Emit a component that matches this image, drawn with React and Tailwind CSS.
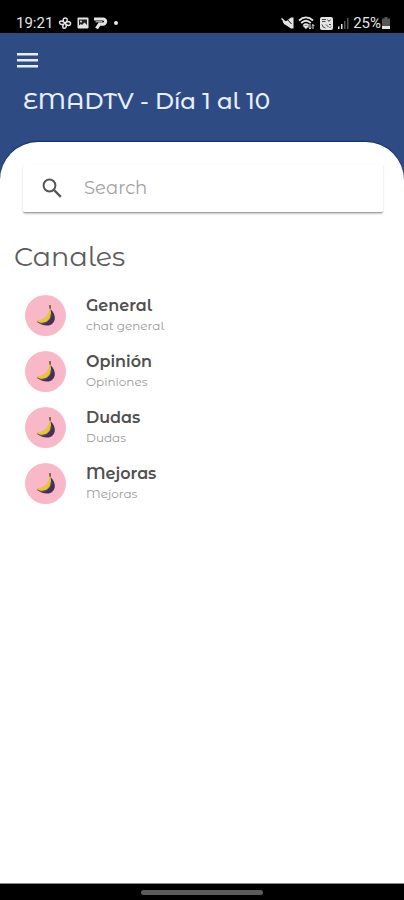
import { useMemo, useState } from 'react'

const channels = [
  { id: 1, name: 'General', detail: 'chat general' },
  { id: 2, name: 'Opinión', detail: 'Opiniones' },
  { id: 3, name: 'Dudas', detail: 'Dudas' },
  { id: 4, name: 'Mejoras', detail: 'Mejoras' },
]

export default function App() {
  const [search, setSearch] = useState('')
  const rows = useMemo(() => channels.filter((c) =>
    !search || (c.name + ' ' + c.detail).toLowerCase().includes(search.toLowerCase())), [search])

  return (
    <div className="min-h-screen flex flex-col bg-[#2f4b83] font-['Montserrat_Alternates','Inter',sans-serif]">
      <StatusBar />
      <header className="pt-[13px] pb-[25px] flex flex-col">
        <button aria-label="Menu" className="ml-4 w-6 h-7 grid place-items-center text-[#e6efff]">
          <svg viewBox="0 0 22 16" className="w-[22px] h-4" fill="currentColor" aria-hidden="true">
            <path d="M0 1h21v2.6H0zM0 7h21v2.6H0zM0 13h21v2.6H0z" />
          </svg>
        </button>
        <h1 className="mt-[11px] ml-[23px] text-[23px] leading-8 font-medium text-[#e6efff]">EMADTV - Día 1 al 10</h1>
      </header>

      <main className="flex-1 bg-white rounded-t-[38px] shadow-[0_-1px_1px_#123064] pt-[22px]">
        <div className="ml-[23px] mr-[21px] h-[49px] flex items-center rounded-xs border-b border-[#a3a3a3] shadow-[0_1px_2px_rgba(0,0,0,0.22)]">
          <svg viewBox="0 0 20 20" className="ml-[19px] w-5 h-5 shrink-0" fill="none" stroke="#555" strokeWidth="2" aria-hidden="true">
            <circle cx="7.5" cy="7.5" r="5.9" />
            <path d="M12 12l6.8 6.8" strokeWidth="2.4" />
          </svg>
          <input aria-label="Search" value={search} onChange={(e) => setSearch(e.target.value)} placeholder="Search"
            className="ml-[22px] min-w-0 flex-1 text-lg text-[#555] outline-none placeholder:text-[#a3a3a3]" />
        </div>

        <h2 className="mt-6 ml-[14px] text-[27px] leading-10 text-[#5c5c5c]">Canales</h2>
        <ul className="mt-[10px]">
          {rows.map((c) => (
            <li key={c.id}>
              <button className="w-full h-14 pl-[25px] flex items-center gap-5 text-left">
                <Avatar />
                <span className="flex flex-col pt-[2px]">
                  <span className="text-base leading-5 font-semibold text-[#505050]">{c.name}</span>
                  <span className="text-xs leading-5 text-[#999]">{c.detail}</span>
                </span>
              </button>
            </li>
          ))}
        </ul>
      </main>

      <footer className="h-[17px] border-t border-[#8a8a8a] bg-black grid place-items-center">
        <div className="w-[122px] h-[5px] rounded-full bg-[#5b5b5b]" />
      </footer>
    </div>
  )
}

function Avatar() {
  return (
    <span className="w-[41px] h-[41px] rounded-full bg-[#f8b8c8] shrink-0">
      <svg viewBox="0 0 41 41" className="w-full h-full" aria-hidden="true">
        <path d="M25.500 14c3 3 4.500 6 4.300 9.500-.2 4.300-3.700 7.300-8 7.100-3.300-.2-6.300-1-8.300-3L24 20z" fill="#44305f" />
        <path d="M24.400 10.500l1.200.200c0 2-.2 3.500.2 5 1 5.500-.5 9-4.800 11.300-3.500 1.900-7.500 1.500-9.500-1.700 4.500-.2 8.200-1.700 10.300-4.800 2.100-2.800 2.800-6 2.600-10z" fill="#e5c540" />
        <path d="M12.200 26.800c2.500 2 6 2 9.300.2 3-1.700 4.600-4.500 4.600-8" fill="none" stroke="#7d5a34" strokeWidth="1" />
        <path d="M24.200 10l1.500.200.200 3.500-1.500-.200z" fill="#6b4a2b" />
      </svg>
    </span>
  )
}

function StatusBar() {
  return (
    <div className="h-[33px] pl-4 pr-[14px] pt-[13px] bg-black text-[#e4e4e4] flex items-center justify-between font-['Roboto',sans-serif] text-[15px] leading-4">
      <div className="flex items-center gap-[5px]">
        <span>19:21</span>
        <svg viewBox="0 0 14 14" className="w-[14px] h-[14px]" fill="none" stroke="currentColor" strokeWidth="1.500" aria-hidden="true">
          <path d="M7 7C4 5 5 1.500 7.500 2S10 5.500 7 7c3-2.500 6-1 5.500 1.200S9 10 7 7c2.500 3 1 5.500-1 5.200S4.500 9 7 7C4.500 9.500 1.500 8.500 1.500 6.500S4.500 4.500 7 7z" />
        </svg>
        <svg viewBox="0 0 12 12" className="w-3 h-3" aria-hidden="true">
          <rect x="0.500" y="0.500" width="11" height="11" rx="1" fill="currentColor" />
          <path d="M2 2.500h8V8L7.500 5.500 5 8 3.800 7 2 8.500z" fill="#222" />
          <circle cx="4" cy="4.500" r="1" fill="currentColor" />
        </svg>
        <svg viewBox="0 0 14 12" className="w-[14px] h-3" fill="none" stroke="currentColor" aria-hidden="true">
          <path d="M0 2h9a2.600 2.600 0 0 1 0 5.200H5.500L2.500 11.500" strokeWidth="3.200" />
          <path d="M1.500 4.800h7" strokeWidth="1" />
        </svg>
        <span className="ml-px w-1 h-1 rounded-full bg-[#e4e4e4]" />
      </div>
      <div className="flex items-center gap-1">
        <svg viewBox="0 0 13 12" className="w-[13px] h-3" aria-hidden="true">
          <path d="M1.500 4h4l4.500-3.500h2.500v11H10L5.500 8.500 3 7z" fill="currentColor" />
          <path d="M5.500 1.500l5 5.500" stroke="#111" strokeWidth="1" />
          <path d="M.5 1.500l10.500 9.500" stroke="currentColor" strokeWidth="1.500" />
        </svg>
        <svg viewBox="0 0 17 14" className="w-[17px] h-[14px]" fill="none" stroke="currentColor" strokeWidth="1.800" aria-hidden="true">
          <path d="M1 4.500c4.300-4 9.700-4 14 0M3.200 7c3-2.800 6.600-2.800 9.600 0M5.500 9.300c1.500-1.400 3.500-1.400 5 0" />
          <path d="M8 11.800l-1.500-1.500h3z" fill="currentColor" />
          <path d="M12 8v5m-1.300-1.500L12 13l1.300-1.500M15 13V8.500m-1.300 1.300L15 8.500l1.300 1.300" strokeWidth="1" />
        </svg>
        <svg viewBox="0 0 13 13" className="w-[13px] h-[13px] ml-px" aria-hidden="true">
          <rect width="13" height="13" rx="2" fill="currentColor" />
          <path d="M2 2.500h4M2 4.500h3.500M7.500 2.500L9 4.500l1.500-2M2 7.500a4 4 0 0 0 3.500 3.500M6 7.500l2.500 2.500M9 7.500h2M9.500 11l1.500-1.500" fill="none" stroke="#444" strokeWidth="1" />
        </svg>
        <svg viewBox="0 0 12 12" className="w-3 h-3" aria-hidden="true">
          <path d="M1 9.500h1.500V12H1zM4 7h1.500v5H4z" fill="currentColor" />
          <path d="M7 4h1.500v8H7zM10 1h1.500v11H10z" fill="#555" />
        </svg>
        <div className="flex items-center gap-px">
          <span>25%</span>
          <svg viewBox="0 0 8 12" className="w-2 h-3" aria-hidden="true">
            <path d="M2.500 0h3v1.500H8V9H0V1.500h2.500z" fill="#555" />
            <path d="M0 9h8v3H0z" fill="currentColor" />
          </svg>
        </div>
      </div>
    </div>
  )
}
